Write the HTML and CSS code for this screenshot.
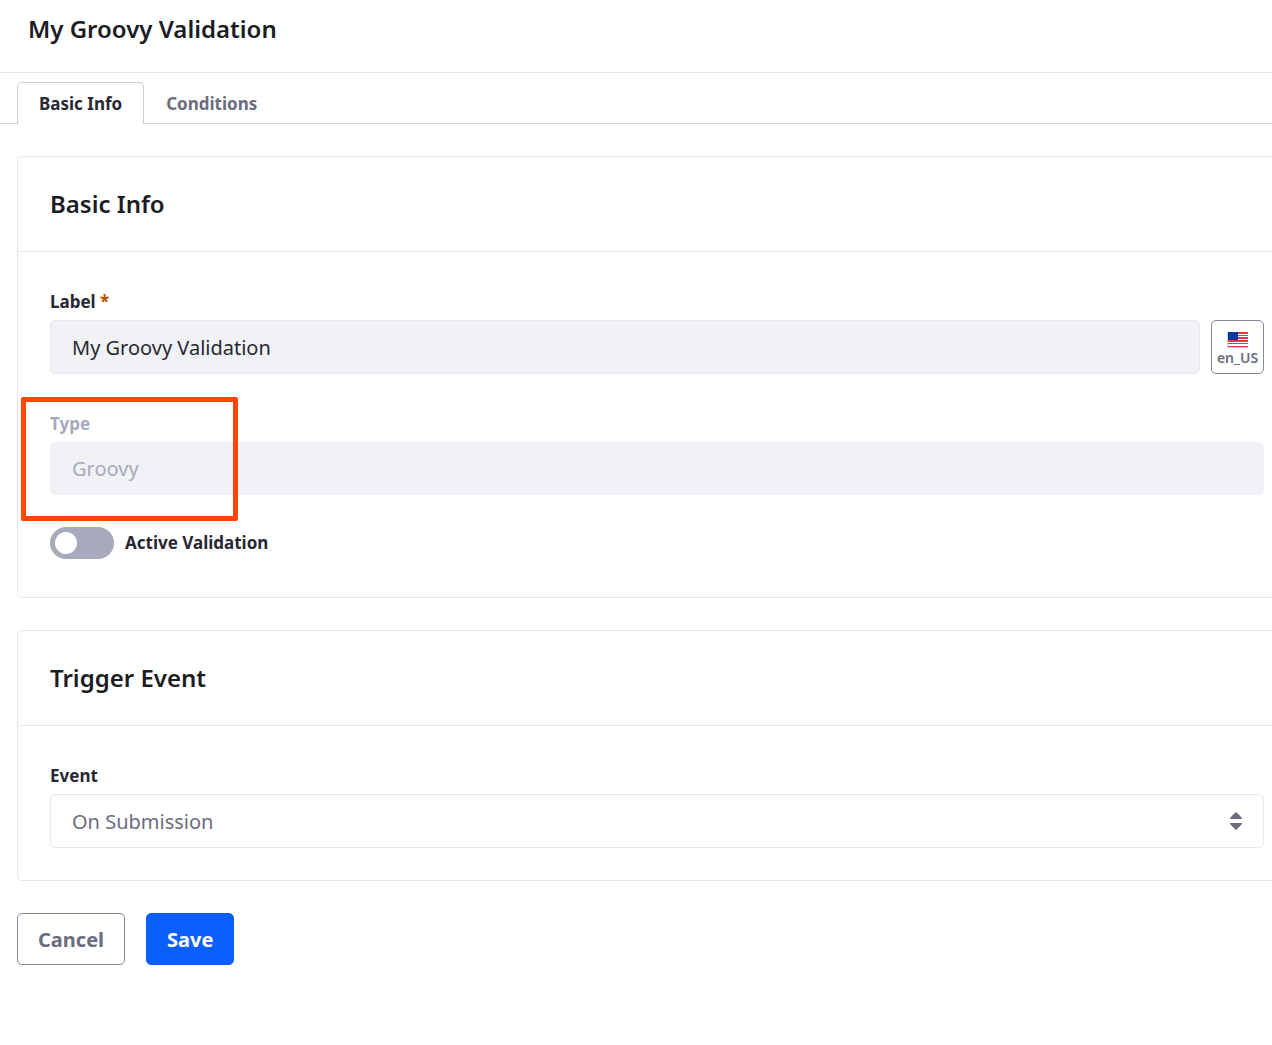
FILE: index.html
```html
<!DOCTYPE html>
<html lang="en">
<head>
<meta charset="utf-8">
<title>My Groovy Validation</title>
<link rel="stylesheet" href="styles.css">
</head>
<body>
<header class="page-header"><h1 class="title">My Groovy Validation</h1></header>
<nav class="tabs">
  <a class="tab tab-active" href="#basic-info">Basic Info</a>
  <a class="tab" href="#conditions">Conditions</a>
</nav>
<form class="form">
  <section class="card" id="basic-info">
    <h2 class="title card-header">Basic Info</h2>
    <div class="card-body">
      <div class="field">
        <label class="label" for="label">Label <span class="required">*</span></label>
        <div class="input-row">
          <input class="control" id="label" type="text" value="My Groovy Validation">
          <button class="locale" type="button">
            <svg class="flag" viewBox="0 0 21 16" aria-hidden="true">
              <path fill="#fff" d="M0 0h21v16H0z"/>
              <path fill="#c9cad3" d="M0 0h1v16H0zM0 15h21v1H0z"/>
              <path fill="#e0393e" d="M11 0h10v2H11zM11 3h10v1H11zM11 5h10v2H11zM1 8h20v2H1zM1 11h20v1H1zM1 14h20v1H1z"/>
              <path fill="#0536a0" d="M1 0h10v8H1z"/>
            </svg>
            <span>en_US</span>
          </button>
        </div>
      </div>
      <div class="field type-field">
        <label class="label label-disabled" for="type">Type</label>
        <input class="control" id="type" type="text" value="Groovy" disabled>
        <span class="highlight"></span>
      </div>
      <label class="toggle">
        <input class="switch" type="checkbox">
        <span>Active Validation</span>
      </label>
    </div>
  </section>
  <section class="card">
    <h2 class="title card-header">Trigger Event</h2>
    <div class="card-body">
      <label class="label" for="event">Event</label>
      <div class="select-wrap">
        <select class="control select" id="event"><option>On Submission</option></select>
        <svg class="caret" viewBox="0 0 12 18" aria-hidden="true"><path fill="#6b6c7e" d="M.5 7Q-.3 6.500.5 5.500L5.300.6Q6 0 6.700.6L11.500 5.500Q12.300 6.500 11.500 7zM.5 11Q-.3 11.500.5 12.500L5.300 17.400Q6 18 6.700 17.400L11.500 12.500Q12.300 11.500 11.500 11z"/></svg>
      </div>
    </div>
  </section>
  <div class="actions">
    <button class="button" type="button">Cancel</button>
    <button class="button button-primary" type="button">Save</button>
  </div>
</form>
</body>
</html>
```
FILE: styles.css
```css
* { box-sizing: border-box; }
body { margin: 0; background: #fff; color: #272833; font-family: "Noto Sans", sans-serif; font-size: 17px; overflow-x: hidden; }
button, input, select { font: inherit; }
.title { margin: 0; color: #1c1c24; font-size: 24px; font-weight: 600; line-height: 30px; }
.page-header { padding: 14px 28px 28px; border-bottom: 1px solid #e7e7ed; }
.tabs { display: flex; padding: 9px 17px 0; border-bottom: 1px solid #cdced9; }
.tab { padding: 9px 21px 8px; margin-bottom: -1px; border: 1px solid transparent; border-bottom: 0; border-radius: 5px 5px 0 0; color: #6b6c7e; font-weight: 700; line-height: 24px; text-decoration: none; }
.tab-active { border-color: #cdced9; background: #fff; color: #272833; }
.form { padding: 32px 0 32px 17px; }
.card { margin-bottom: 32px; border: 1px solid #e7e7ed; border-right: 0; border-radius: 5px 0 0 5px; }
.card-header { padding: 32px; border-bottom: 1px solid #e7e7ed; }
.card-body { padding: 38px 8px 32px 32px; }
.field { margin-bottom: 38px; }
.label { display: block; margin-bottom: 6px; font-weight: 700; line-height: 24px; }
.required { color: #b95000; }
.label-disabled { color: #a7a9bc; }
.input-row { display: flex; gap: 11px; }
.control { display: block; flex: 1; width: 100%; min-width: 0; height: 54px; padding: 0 21px; border: 1px solid #e7e7ed; border-radius: 5px; background: #f1f2f5; color: #272833; font-size: 20px; }
.control:disabled { height: 53px; border-color: #f1f2f5; color: #a7a9bc; }
.locale { display: flex; flex-direction: column; align-items: center; justify-content: flex-end; gap: 1px; width: 53px; padding: 0 0 6px; border: 1px solid #868798; border-radius: 5px; background: #fff; color: #6b6c7e; font-size: 14px; font-weight: 600; line-height: 18px; }
.flag { width: 21px; height: 16px; }
.type-field { position: relative; margin-bottom: 32px; }
.highlight { position: absolute; top: -15px; left: -29px; width: 217px; height: 124px; border: 5px solid #ff4500; border-radius: 2px; pointer-events: none; }
.toggle { display: flex; align-items: center; gap: 11px; width: fit-content; margin-bottom: 6px; font-weight: 700; line-height: 32px; }
.switch { appearance: none; display: flex; align-items: center; width: 64px; height: 32px; margin: 0; padding: 0 5px; border-radius: 16px; background: #a7a9bc; }
.switch::before { content: ""; width: 22px; height: 22px; border-radius: 50%; background: #fff; }
.switch:checked { justify-content: flex-end; background: #0b5fff; }
.select-wrap { position: relative; }
.select { appearance: none; background: #fff; color: #6b6c7e; }
.caret { position: absolute; top: 18px; right: 22px; width: 12px; height: 18px; pointer-events: none; }
.actions { display: flex; gap: 21px; }
.button { height: 52px; padding: 0 20px; border: 1px solid #868798; border-radius: 5px; background: #fff; color: #6b6c7e; font-size: 20px; font-weight: 700; }
.button-primary { border-color: #0b5fff; background: #0b5fff; color: #fff; }
```
